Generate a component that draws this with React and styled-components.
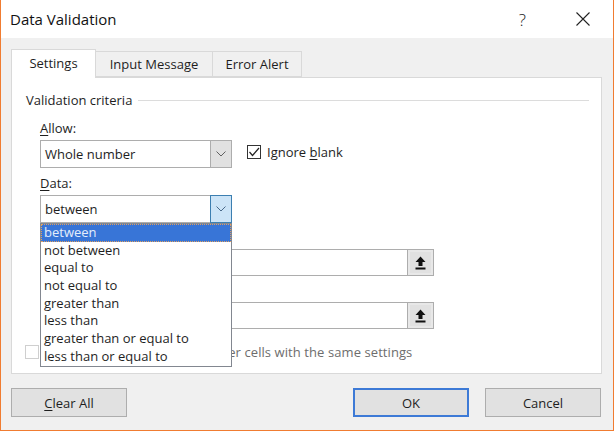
import styled, { createGlobalStyle } from "styled-components";

const FONT = `"Open Sans", "Noto Sans", "Liberation Sans", sans-serif`;

const GlobalStyle = createGlobalStyle`
  html, body { margin: 0; padding: 0; background: #fff; }
  * { box-sizing: border-box; }
`;

const Window = styled.div`
  width: 614px;
  height: 431px;
  border: 1px solid #f07c31;
  border-top: none;
  display: flex;
  flex-direction: column;
  font-family: ${FONT};
  font-size: 12.5px;
  color: #1e1e1e;
`;
const TitleBar = styled.div`
  height: 38px;
  flex: none;
  background: #fff;
  display: flex;
  align-items: center;
  padding-left: 9px;
`;
const Title = styled.div`
  flex: 1;
  font-size: 15px;
  color: #111;
`;
const Help = styled.div`
  font-size: 17px;
  font-weight: 300;
  color: #222;
  margin-right: 50px;
`;
const Close = styled.div`
  width: 14px;
  height: 14px;
  margin-right: 23px;
  display: flex;
`;
const Body = styled.div`
  flex: 1;
  background: #f0f0f0;
  padding: 10px 11px 0 10px;
  display: flex;
  flex-direction: column;
`;
const Tabs = styled.div`
  display: flex;
  align-items: flex-end;
  height: 29px;
  position: relative;
  z-index: 1;
`;
const Tab = styled.div`
  width: ${(p) => p.$w}px;
  height: ${(p) => (p.$active ? 29 : 26)}px;
  margin-bottom: ${(p) => (p.$active ? -1 : 0)}px;
  background: ${(p) => (p.$active ? "#fff" : "#f0f0f0")};
  border: 1px solid #d9d9d9;
  border-bottom: ${(p) => (p.$active ? "none" : "1px solid #d9d9d9")};
  margin-left: ${(p) => (p.$active ? 0 : -1)}px;
  display: flex;
  align-items: center;
  justify-content: center;
  font-size: 13px;
  padding-bottom: ${(p) => (p.$active ? 2 : 0)}px;
`;
const Panel = styled.div`
  height: 297px;
  background: #fff;
  border: 1px solid #d9d9d9;
  padding: 13px 12px 0 14px;
  display: flex;
  flex-direction: column;
`;
const Legend = styled.div`
  display: flex;
  align-items: center;
  height: 18px;
  font-size: 13px;
  &::after {
    content: "";
    flex: 1;
    height: 1px;
    background: #dcdcdc;
    margin-left: 6px;
  }
`;
const Group = styled.div`
  padding-left: 14px;
  display: flex;
  flex-direction: column;
`;
const Label = styled.div`
  height: 18px;
  line-height: 18px;
  font-size: 13px;
  margin-top: ${(p) => p.$mt}px;
  margin-bottom: 3px;
`;
const Row = styled.div`
  display: flex;
  align-items: flex-start;
`;
const SelectWrap = styled.div`
  position: relative;
  width: 192px;
`;
const Select = styled.div`
  height: 28px;
  border: 1px solid #adadad;
  display: flex;
  background: #fff;
`;
const SelectValue = styled.div`
  flex: 1;
  display: flex;
  align-items: center;
  padding-left: 4px;
  font-size: 13px;
`;
const Arrow = styled.div`
  width: 22px;
  margin: -1px -1px -1px 0;
  background: ${(p) => (p.$open ? "#cce4f7" : "#e1e1e1")};
  border: 1px solid ${(p) => (p.$open ? "#3c7fb1" : "#adadad")};
  display: flex;
  align-items: center;
  justify-content: center;
`;
const Check = styled.label`
  display: flex;
  align-items: center;
  margin-left: ${(p) => (p.$disabled ? 0 : 15)}px;
  margin-top: ${(p) => (p.$disabled ? 0 : 3)}px;
  font-size: 13px;
  letter-spacing: ${(p) => (p.$disabled ? 0.08 : 0)}px;
  color: ${(p) => (p.$disabled ? "#6d6d6d" : "#1e1e1e")};
`;
const Box = styled.span`
  width: 14px;
  height: 14px;
  border: 1px solid ${(p) => (p.$disabled ? "#cfcfcf" : "#333")};
  background: #fff;
  display: flex;
  margin-right: 6px;
`;
const List = styled.div`
  position: absolute;
  top: 28px;
  left: 0;
  width: 192px;
  border: 1px solid #828790;
  background: #fff;
  z-index: 5;
`;
const Item = styled.div`
  height: 17.7px;
  line-height: 17.7px;
  padding-left: 3px;
  font-size: 13px;
  background: ${(p) => (p.$selected ? "#3875d7" : "transparent")};
  color: ${(p) => (p.$selected ? "#e4edfb" : "#1e1e1e")};
  outline: ${(p) => (p.$selected ? "1px dotted #e0a060" : "none")};
  outline-offset: -1px;
`;
const Spacer = styled.div`
  height: 26px;
`;
const RangeInput = styled.div`
  width: 394px;
  height: 27px;
  border: 1px solid #adadad;
  display: flex;
  justify-content: flex-end;
  background: #fff;
`;
const Picker = styled.div`
  width: 27px;
  margin: -1px -1px -1px 0;
  border: 1px solid #adadad;
  background: #e1e1e1;
  display: flex;
  align-items: center;
  justify-content: center;
  box-shadow: inset 0 0 0 2px #e8e8e8;
`;
const Apply = styled.div`
  margin-top: 14px;
  margin-left: -1px;
`;
const Buttons = styled.div`
  display: flex;
  margin-top: 14px;
  height: 29px;
`;
const Button = styled.div`
  width: 116px;
  height: 29px;
  background: #e1e1e1;
  border: ${(p) => (p.$default ? "2px solid #3d7ad6" : "1px solid #adadad")};
  display: flex;
  align-items: center;
  justify-content: center;
  font-size: 13px;
  margin-left: ${(p) => p.$ml || 0}px;
`;
const U = styled.span`
  text-decoration: underline;
  text-underline-offset: 2px;
`;

const Chevron = ({ color = "#606060" }) => (
  <svg width="10" height="6" viewBox="0 0 10 6">
    <path d="M0.5 0.5 L5 5 L9.5 0.5" fill="none" stroke={color} strokeWidth="1" />
  </svg>
);

const Tick = () => (
  <svg width="12" height="12" viewBox="0 0 12 12">
    <path d="M1.5 6 L4.5 9.5 L11 2" fill="none" stroke="#222" strokeWidth="1.2" />
  </svg>
);

const UploadIcon = () => (
  <svg width="11" height="14" viewBox="0 0 11 14">
    <polygon points="5.5,0.5 10.5,6 7.5,6 7.5,10 3.5,10 3.5,6 0.5,6" fill="#111" />
    <rect x="0.5" y="11.5" width="10" height="2" fill="#111" />
  </svg>
);

const OPTIONS = [
  "between",
  "not between",
  "equal to",
  "not equal to",
  "greater than",
  "less than",
  "greater than or equal to",
  "less than or equal to",
];

export default function App() {
  return (
    <>
      <GlobalStyle />
      <Window>
        <TitleBar>
          <Title>Data Validation</Title>
          <Help>?</Help>
          <Close>
            <svg width="14" height="14" viewBox="0 0 14 14">
              <path d="M0.5 0.5 L13.5 13.5 M13.5 0.5 L0.5 13.5" stroke="#222" strokeWidth="1.1" />
            </svg>
          </Close>
        </TitleBar>
        <Body>
          <Tabs>
            <Tab $active $w={85}>Settings</Tab>
            <Tab $w={118}>Input Message</Tab>
            <Tab $w={90}>Error Alert</Tab>
          </Tabs>
          <Panel>
            <Legend>Validation criteria</Legend>
            <Group>
              <Label $mt={10}>
                <U>A</U>llow:
              </Label>
              <Row>
                <SelectWrap>
                  <Select>
                    <SelectValue>Whole number</SelectValue>
                    <Arrow>
                      <Chevron />
                    </Arrow>
                  </Select>
                </SelectWrap>
                <Check>
                  <Box>
                    <Tick />
                  </Box>
                  Ignore&nbsp;<U>b</U>lank
                </Check>
              </Row>
              <Label $mt={6}>
                <U>D</U>ata:
              </Label>
              <SelectWrap>
                <Select>
                  <SelectValue>between</SelectValue>
                  <Arrow $open>
                    <Chevron color="#4a6a8a" />
                  </Arrow>
                </Select>
                <List>
                  {OPTIONS.map((o, i) => (
                    <Item key={o} $selected={i === 0}>
                      {o}
                    </Item>
                  ))}
                </List>
              </SelectWrap>
              <Spacer />
              <RangeInput>
                <Picker>
                  <UploadIcon />
                </Picker>
              </RangeInput>
              <Spacer />
              <RangeInput>
                <Picker>
                  <UploadIcon />
                </Picker>
              </RangeInput>
            </Group>
            <Apply>
              <Check $disabled>
                <Box $disabled />
                Apply these changes to all other cells with the same settings
              </Check>
            </Apply>
          </Panel>
          <Buttons>
            <Button>
              <span>
                <U>C</U>lear All
              </span>
            </Button>
            <Button $default $ml={226}>
              OK
            </Button>
            <Button $ml={16}>Cancel</Button>
          </Buttons>
        </Body>
      </Window>
    </>
  );
}
